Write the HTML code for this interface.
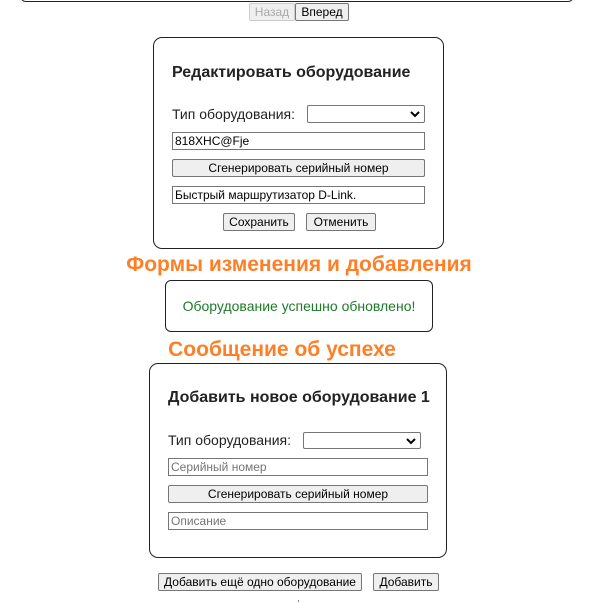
<!DOCTYPE html>
<html><head><meta charset="utf-8">
<style>
*{box-sizing:border-box;margin:0;padding:0}
body{width:601px;height:603px;background:#fff;position:relative;font-family:"Liberation Sans",Arial,sans-serif;overflow:hidden}
.abs{position:absolute}
.card{position:absolute;border:1px solid #222;border-radius:9px}
.btn{position:absolute;background:#efefef;border:1px solid #767676;font-size:12px;color:#000;text-align:center;line-height:16px;border-radius:2px;white-space:nowrap}
.inp{position:absolute;border:1px solid #767676;background:#fff;font-size:12px;line-height:16px;padding-left:2px;color:#000}
.sel{position:absolute;border:1px solid #767676;background:#fff;border-radius:2px}
.sel svg{position:absolute;right:4px;top:4px}
.title{position:absolute;font-weight:bold;font-size:16px;color:#222;white-space:nowrap}
.lbl{position:absolute;font-size:14px;color:#222;white-space:nowrap}
.or{position:absolute;font-weight:bold;font-size:21px;color:#ff7f27;white-space:nowrap;text-align:center}
.ph{color:#757575}
</style></head><body>
<div class="abs" style="left:20px;top:-20px;width:554px;height:22px;border:1px solid #222;border-radius:6px"></div>
<div class="btn" style="left:249px;top:3px;width:46px;height:18px;color:#aaa;border-color:#ccc">Назад</div>
<div class="btn" style="left:295px;top:3px;width:54px;height:18px">Вперед</div>

<div class="card" style="left:153px;top:37px;width:291px;height:212px"></div>
<div class="title" style="left:172px;top:64px">Редактировать оборудование</div>
<div class="lbl" style="left:172px;top:106px">Тип оборудования:</div>
<div class="sel" style="left:307px;top:105px;width:118px;height:18px"><svg width="10" height="8" viewBox="0 0 10 8"><path d="M1 2 L5 6 L9 2" stroke="#000" stroke-width="2" fill="none"/></svg></div>
<div class="inp" style="left:172px;top:132px;width:253px;height:18px">818XHC@Fje</div>
<div class="btn" style="left:172px;top:159px;width:253px;height:18px">Сгенерировать серийный номер</div>
<div class="inp" style="left:172px;top:186px;width:253px;height:18px">Быстрый маршрутизатор D-Link.</div>
<div class="btn" style="left:223px;top:213px;width:72px;height:18px">Сохранить</div>
<div class="btn" style="left:306px;top:213px;width:70px;height:18px">Отменить</div>

<div class="or" style="left:99px;width:400px;top:253px">Формы изменения и добавления</div>
<div class="card" style="left:165px;top:280px;width:268px;height:52px;border-radius:6px"></div>
<div class="lbl" style="left:165px;width:268px;text-align:center;top:298px;color:#1e7a2a;font-size:14px">Оборудование успешно обновлено!</div>
<div class="or" style="left:132px;width:300px;top:338px">Сообщение об успехе</div>

<div class="card" style="left:149px;top:363px;width:298px;height:195px"></div>
<div class="title" style="left:168px;top:389px">Добавить новое оборудование 1</div>
<div class="lbl" style="left:168px;top:432px">Тип оборудования:</div>
<div class="sel" style="left:303px;top:432px;width:118px;height:17px"><svg width="10" height="8" viewBox="0 0 10 8"><path d="M1 2 L5 6 L9 2" stroke="#000" stroke-width="2" fill="none"/></svg></div>
<div class="inp ph" style="left:168px;top:458px;width:260px;height:18px">Серийный номер</div>
<div class="btn" style="left:168px;top:485px;width:260px;height:18px">Сгенерировать серийный номер</div>
<div class="inp ph" style="left:168px;top:512px;width:260px;height:18px">Описание</div>

<div class="btn" style="left:158px;top:573px;width:204px;height:18px">Добавить ещё одно оборудование</div>
<div class="btn" style="left:373px;top:573px;width:66px;height:18px">Добавить</div>
<div class="abs" style="left:298px;top:600px;width:1px;height:2px;background:#888"></div>
</body></html>
